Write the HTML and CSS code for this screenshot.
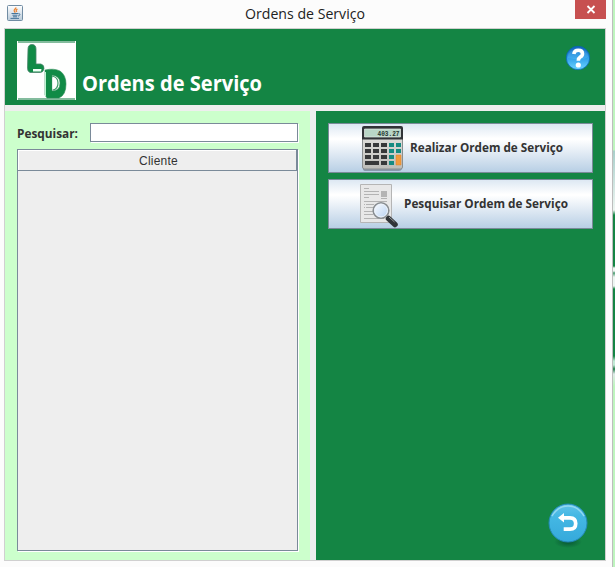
FILE: index.html
```html
<!DOCTYPE html>
<html lang="pt-BR">
<head>
<meta charset="utf-8">
<title>Ordens de Serviço</title>
<link rel="stylesheet" href="styles.css">
</head>
<body>
<div class="desktop">
<div class="window">
  <div class="titlebar">
    <svg class="java" width="16" height="16" viewBox="0 0 16 16">
      <defs><linearGradient id="jb" x2="0" y2="1"><stop stop-color="#fff"/><stop offset="1" stop-color="#b9cbd9"/></linearGradient></defs>
      <rect x=".5" y=".5" width="15" height="15" rx="1" fill="url(#jb)" stroke="#718ca3"/>
      <path d="M8.700 2.300c1 1.200-2.400 2.300-1.400 3.900l1 1.500M10.400 4.100c-1.400.7-1.700 1.400-.5 2.800" fill="none" stroke="#ec8433" stroke-width="1.300"/>
      <path d="M4.500 8.500h6.500M5.500 10.200h5M6 11.800h4M3.500 13.400h8.500M11.300 8.700c2.400-.5 2 2-.3 2.400" fill="none" stroke="#46759a"/>
    </svg>
    <svg class="caption" width="124" height="26"><text x="1" y="16" textLength="120" lengthAdjust="spacingAndGlyphs">Ordens de Serviço</text></svg>
    <div class="close"><svg width="10" height="9" viewBox="0 0 10 9"><path d="M1.500 1l7 7M8.500 1l-7 7" stroke="#fff" stroke-width="1.800"/></svg></div>
  </div>
  <div class="content">
    <header class="header">
      <svg class="logo" width="59" height="59" viewBox="0 0 59 59">
        <path fill="#fefffe" d="M0 0h59v59H0z"/>
        <path d="M1 1h57M1 58h57" stroke="#5ba77e" stroke-width="1.600"/>
        <path d="M11 8q0-4.500 4-4.500t4 4.500v15h5q3.500 1 3 5-1 3.500-4 3.500H13q-2.500-1-2.500-4z" fill="#108b46" stroke="#4a846b" stroke-width=".8"/>
        <path d="M16 28h8.500l-.5 2.500h-8z" fill="#effff5"/>
        <path fill-rule="evenodd" d="M28 29q9-2 15 1 6 4 6 13 0 11-7 14H30l-2-3zM35 34v16q8 0 8-8 0-7-8-8z" fill="#108b46" stroke="#2d8b58" stroke-width=".6"/>
        <path d="M35.500 37q4 1 4.500 5-1 4-4.500 6z" fill="#fff"/>
        <path d="M35 35q6 1 6 7t-5 7" fill="none" stroke="#3c9b66" stroke-width="1.200"/>
        <path d="M28.500 31v24" stroke="#baf4d0"/>
      </svg>
      <svg class="heading" width="186" height="36"><text x="1" y="23" textLength="180" lengthAdjust="spacingAndGlyphs">Ordens de Serviço</text></svg>
      <svg class="help" width="26" height="26" viewBox="0 0 26 26">
        <defs><linearGradient id="hb" x2="0" y2="1"><stop stop-color="#1461ba"/><stop offset=".45" stop-color="#2b9be6"/><stop offset="1" stop-color="#6bd5ff"/></linearGradient></defs>
        <circle cx="13" cy="13" r="11.700" fill="url(#hb)" stroke="#0865b4" stroke-width=".8"/>
        <path d="M3 12Q4 4 13 4t10 8q-5 4-20 1" fill="#8bd4ff" opacity=".2"/>
        <path d="M8.800 9q.6-3.800 4.500-3.800 4.200 0 4.200 3.500 0 2-2.300 3.300-1.900 1.200-1.900 3.800" fill="none" stroke="#fff" stroke-width="3.600"/>
        <circle cx="13.300" cy="20" r="2.600" fill="#fff"/>
      </svg>
    </header>
    <main class="panels">
      <section class="left">
        <div class="search">
          <svg class="label" width="73" height="20"><text x="0" y="15" textLength="61" lengthAdjust="spacingAndGlyphs">Pesquisar:</text></svg>
          <input class="field" type="text" aria-label="Pesquisar">
        </div>
        <div class="table"><div class="th">Cliente</div></div>
      </section>
      <section class="right">
        <button class="action">
          <svg class="calc" width="42" height="47" viewBox="0 0 42 47">
            <defs><linearGradient id="cb" x2="0" y2="1"><stop stop-color="#e8e8e4"/><stop offset="1" stop-color="#bdbdb9"/></linearGradient></defs>
            <path d="M1 42h39v2q-1 2-3 2H4q-3 0-3-2z" fill="#647383" opacity=".6"/>
            <rect x=".5" y="3" width="40" height="41" rx="2" fill="url(#cb)" stroke="#898e8f"/>
            <path d="M0 14.500V3q0-2 2-2h37q2 0 2 2v11.500z" fill="#303337"/>
            <path d="M2.500 4h36v8h-36z" fill="#b9d6c7" stroke="#e6eee9" stroke-width=".7"/>
            <text class="digits" x="15.500" y="11" textLength="22" lengthAdjust="spacingAndGlyphs">403.27</text>
            <path d="M3 20h6m2 0h6m2 0h6M3 26h6m2 0h6m2 0h6M3 32h6m2 0h6m2 0h6M3 38h14m2 0h6" stroke="#37393a" stroke-width="4"/>
            <path d="M27 20h5m2 0h5M27 26h5m2 0h5M27 32h5M27 38h5" stroke="#168b82" stroke-width="4"/>
            <path d="M34 30h5v10h-5z" fill="#f19a3d" stroke="#dc812b" stroke-width=".5"/>
          </svg>
          <svg class="alabel one" width="156" height="22"><text x="0" y="15" textLength="153" lengthAdjust="spacingAndGlyphs">Realizar Ordem de Serviço</text></svg>
        </button>
        <button class="action">
          <svg class="doc" width="40" height="46" viewBox="0 0 40 46">
            <defs><linearGradient id="gl" x2="1" y2="1"><stop stop-color="#fff"/><stop offset="1" stop-color="#b4d0f2"/></linearGradient></defs>
            <path d="M.5 1.500h31v38H.5z" fill="#e8e8e8" stroke="#b5b5b5"/>
            <path d="M4 5.500h5M4 8.500h15M4 11.500h15M4 14.500h5M21 15.500h6M4 18.500h23M4 21.500h1m1 0h8M4 24.500h1m1 0h8M4 28.500h9M4 31.500h9M4 35.500h20" stroke="#b3b3b3"/>
            <path d="M21 8h6v6h-6z" fill="#b4b4b4"/>
            <path d="M28.500 35.500l6.500 6" stroke="#303438" stroke-width="5.500" stroke-linecap="round"/>
            <path d="M29 34l5.500 5" stroke="#96999b"/>
            <circle cx="21" cy="27.500" r="7.700" fill="url(#gl)" stroke="#898e92" stroke-width="1.800"/>
            <circle cx="21" cy="27.500" r="6.500" fill="none" stroke="#eff5fd"/>
          </svg>
          <svg class="alabel two" width="168" height="22"><text x="0" y="15" textLength="164" lengthAdjust="spacingAndGlyphs">Pesquisar Ordem de Serviço</text></svg>
        </button>
        <svg class="back" width="42" height="46" viewBox="0 0 42 46">
          <defs><linearGradient id="bb" x2="0" y2="1"><stop stop-color="#62c3e9"/><stop offset=".3" stop-color="#45b8e4"/><stop offset="1" stop-color="#35a9db"/></linearGradient>
          <radialGradient id="bs"><stop stop-color="#064e31" stop-opacity=".85"/><stop offset="1" stop-color="#064e31" stop-opacity="0"/></radialGradient></defs>
          <ellipse cx="21" cy="39" rx="14" ry="6" fill="url(#bs)"/>
          <circle cx="21" cy="20" r="19" fill="url(#bb)" stroke="#2389b8"/>
          <path d="M5 13Q11 3 21 3t16 10" fill="none" stroke="#93d8f2" stroke-width="1.500"/>
          <path d="M16 14.800h7q5.700 0 5.700 5.700t-5.700 5.700h-6.300" fill="none" stroke="#fff" stroke-width="3.700"/>
          <path d="M11 14.800l6-4.800v9.600z" fill="#fff"/>
        </svg>
      </section>
    </main>
  </div>
</div>
<div class="behind"></div>
</div>
</body>
</html>
```
FILE: styles.css
```css
* { box-sizing: border-box; }
body { margin: 0; width: 615px; height: 567px; overflow: hidden; }
.desktop { display: flex; height: 567px; }
.window { width: 613px; height: 567px; background: #fcfcfc; border-right: 1px solid #bdbdbd; }
.titlebar { height: 28px; display: flex; align-items: flex-start; padding-left: 7px; }
svg { display: block; flex: none; overflow: visible; }
.java { margin-top: 5px; }
.caption { margin: 3px 0 0 221px; font: 15px "Open Sans", sans-serif; fill: #222; }
.close { width: 31px; height: 19px; margin-left: auto; margin-right: 6px; background: #c75050; display: flex; align-items: center; justify-content: center; }
.content { width: 602px; height: 533px; margin-left: 4px; border: 1px solid #d0d0d0; background: #eee; display: flex; flex-direction: column; gap: 6px; }
.header { height: 76px; background: #148544; display: flex; align-items: flex-start; padding: 12px 14px 0 12px; }
.heading { margin: 27px 0 0 5px; font: bold 22px "Open Sans", sans-serif; fill: #fff; }
.help { margin: 4px 0 0 auto; }
.panels { height: 449px; display: flex; gap: 6px; }
.left { width: 305px; background: #cfc; padding: 12px 12px 9px; display: flex; flex-direction: column; gap: 6px; }
.search { display: flex; height: 20px; }
.label { font: bold 13px "Open Sans", sans-serif; fill: #333; }
.field { width: 208px; height: 19px; padding: 0 3px; background: #fff; border: 1px solid #7a8a99; outline: 0; box-shadow: 1px 1px #fff; }
.table { width: 281px; height: 402px; border: 1px solid #7a8a99; background: #eee; box-shadow: 1px 1px #fff; }
.th { height: 21px; border: solid #7a8a99; border-width: 0 1px 1px 0; box-shadow: inset 1px 1px #fff; font: 12px/22px "Liberation Sans", sans-serif; letter-spacing: .2px; text-align: center; padding-left: 3px; color: #333; }
.right { width: 289px; background: #148544; padding: 12px 12px 11px; display: flex; flex-direction: column; gap: 6px; }
.action { width: 265px; height: 50px; border: 1px solid #7a8a99; padding: 0; display: flex; align-items: flex-start; background: linear-gradient(#dde8f3 0%, #fff 30%, #fff 32%, #b8cfe5 100%); }
.calc { margin: 1px 0 0 33px; }
.doc { margin: 3px 0 0 31px; }
.alabel { font: bold 13px "Open Sans", sans-serif; fill: #333; margin-top: 13px; }
.one { margin-left: 6px; }
.two { margin-left: 4px; }
.digits { font: bold 8px "Liberation Mono", monospace; fill: #25352f; }
.back { margin: auto 4px 0 auto; }
.behind { width: 2px; height: 567px; background: linear-gradient(#bef5be 0 150px, #a9cfca 151px, #eef6f2 210px, #148544 215px 266px, #eef6f2 268px 271px, #4b9b70 273px, #eef6f2 277px 286px, #148544 289px 356px, #c2ead5 361px 365px, #287d4e 369px, #dfebe9 374px, #bef5be 386px); }
```
